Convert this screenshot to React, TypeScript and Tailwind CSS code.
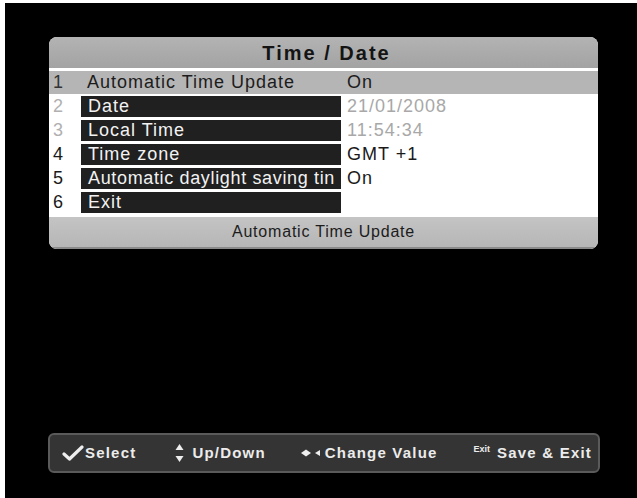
import React from 'react';

interface MenuRow {
  num: string;
  label: string;
  value: string;
  dim?: boolean;
  tight?: boolean;
}

const rows: MenuRow[] = [
  { num: '2', label: 'Date', value: '21/01/2008', dim: true },
  { num: '3', label: 'Local Time', value: '11:54:34', dim: true },
  { num: '4', label: 'Time zone', value: 'GMT +1' },
  { num: '5', label: 'Automatic daylight saving tin', value: 'On', tight: true },
  { num: '6', label: 'Exit', value: '' },
];

const font = { fontFamily: '"Liberation Sans", Arial, sans-serif' };

const CheckIcon = () => (
  <svg width="22" height="16" viewBox="0 0 22 16">
    <path d="M2 9 L7.5 14 L20 2" fill="none" stroke="#eeeeee" strokeWidth="3.2" strokeLinecap="round" strokeLinejoin="round" />
  </svg>
);

const UpDownIcon = () => (
  <svg width="9" height="20" viewBox="0 0 9 20">
    <polygon points="4.5,1 8.5,7 0.5,7" fill="#eeeeee" />
    <polygon points="0.5,13 8.5,13 4.5,19" fill="#eeeeee" />
  </svg>
);

const LeftRightIcon = () => (
  <svg width="22" height="10" viewBox="0 0 22 10">
    <polygon points="1,5 6,1.5 11,5 6,8.5" fill="#eeeeee" />
    <polygon points="15,5 20,2 20,8" fill="#eeeeee" />
  </svg>
);

export default function App() {
  return (
    <div className="w-[637px] h-[498px] bg-white pl-[5px] pt-[3px]" style={font}>
      <div className="h-full bg-black flex flex-col">
        {/* menu panel */}
        <div className="mt-[34px] ml-[44px] w-[549px] rounded-[8px] overflow-hidden bg-white">
          <div className="h-[31px] bg-gradient-to-b from-[#b3b3b3] to-[#a3a3a3] flex items-center justify-center text-[20px] font-bold tracking-[2px] text-[#141414] pl-[6px]">
            Time / Date
          </div>
          <div className="h-[3px] bg-white" />
          <div className="h-[23px] bg-[#b5b5b5] flex items-center text-[18px] tracking-[1px] text-[#1c1c1c]">
            <span className="w-[32px] pl-[4px] text-[#333]">1</span>
            <span className="w-[266px] pl-[6px]">Automatic Time Update</span>
            <span>On</span>
          </div>
          {rows.map((r) => (
            <div key={r.num} className="h-[24px] flex items-center text-[18px] tracking-[1px]">
              <span className={`w-[32px] pl-[4px] ${r.dim ? 'text-[#b0b0b0]' : 'text-[#1a1a1a]'}`}>{r.num}</span>
              <span className={`w-[260px] h-[21px] bg-[#202020] text-[#f2f2f2] pl-[7px] leading-[21px] whitespace-nowrap overflow-hidden ${r.tight ? 'tracking-[0.65px]' : ''}`}>
                {r.label}
              </span>
              <span className={`pl-[6px] ${r.dim ? 'text-[#a8a8a8]' : 'text-[#1a1a1a]'}`}>{r.value}</span>
            </div>
          ))}
          <div className="h-[3px] bg-white" />
          <div className="h-[32px] bg-gradient-to-b from-[#c4c4c4] to-[#b6b6b6] border-b-[2px] border-[#8a8a8a] flex items-center justify-center text-[16px] tracking-[0.8px] text-[#1c1c1c]">
            Automatic Time Update
          </div>
        </div>

        {/* help bar */}
        <div className="mt-[184px] ml-[43px] w-[552px] h-[40px] rounded-[6px] bg-[#343434] border-[2px] border-[#5a5a5a] flex items-center text-[15px] font-bold tracking-[1.2px] text-[#ececec]">
          <span className="ml-[12px] w-[23px] flex"><CheckIcon /></span>
          <span>Select</span>
          <span className="ml-[39px] flex"><UpDownIcon /></span>
          <span className="ml-[8px]">Up/Down</span>
          <span className="ml-[34px] flex"><LeftRightIcon /></span>
          <span className="ml-[3px]">Change Value</span>
          <span className="ml-[36px] self-start mt-[8px] text-[9px] tracking-normal">Exit</span>
          <span className="ml-[7px]">Save &amp; Exit</span>
        </div>
      </div>
    </div>
  );
}
